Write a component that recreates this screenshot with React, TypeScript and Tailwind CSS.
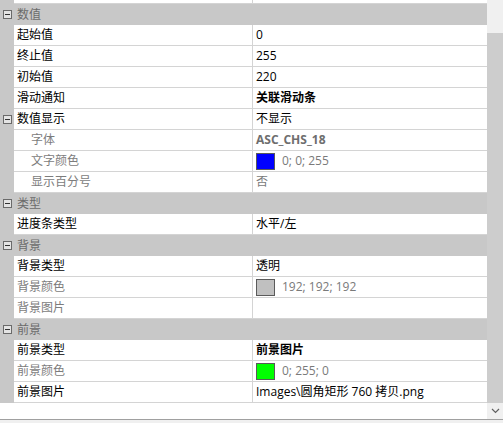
import type { ReactNode } from 'react'

type Prop = {
  kind: 'header' | 'row'
  name: string
  value?: ReactNode
  expand?: boolean
  indent?: boolean
  dim?: boolean
}

const FONT = { fontFamily: '"Open Sans", "Noto Sans CJK SC", sans-serif' }

function Swatch({ color, text }: { color: string; text: string }) {
  return (
    <span className="flex items-center gap-[7px]">
      <span className={`h-[17px] w-[19px] border border-[#5a5a5a] ${color}`} />
      <span className="text-[#7a7a7a]">{text}</span>
    </span>
  )
}

const props: Prop[] = [
  { kind: 'header', name: '数值' },
  { kind: 'row', name: '起始值', value: '0' },
  { kind: 'row', name: '终止值', value: '255' },
  { kind: 'row', name: '初始值', value: '220' },
  { kind: 'row', name: '滑动通知', value: <span className="font-bold">关联滑动条</span> },
  { kind: 'row', name: '数值显示', value: '不显示', expand: true },
  { kind: 'row', name: '字体', indent: true, dim: true, value: <span className="font-bold text-[#6e6e6e]">ASC_CHS_18</span> },
  { kind: 'row', name: '文字颜色', indent: true, dim: true, value: <Swatch color="bg-[#0000ff]" text="0; 0; 255" /> },
  { kind: 'row', name: '显示百分号', indent: true, dim: true, value: <span className="text-[#7a7a7a]">否</span> },
  { kind: 'header', name: '类型' },
  { kind: 'row', name: '进度条类型', value: '水平/左' },
  { kind: 'header', name: '背景' },
  { kind: 'row', name: '背景类型', value: '透明' },
  { kind: 'row', name: '背景颜色', dim: true, value: <Swatch color="bg-[#c0c0c0]" text="192; 192; 192" /> },
  { kind: 'row', name: '背景图片', dim: true, value: '' },
  { kind: 'header', name: '前景' },
  { kind: 'row', name: '前景类型', value: <span className="font-bold">前景图片</span> },
  { kind: 'row', name: '前景颜色', dim: true, value: <Swatch color="bg-[#00ff00]" text="0; 255; 0" /> },
  { kind: 'row', name: '前景图片', value: 'Images\\圆角矩形 760 拷贝.png' },
]

function MinusBox() {
  return (
    <svg width="9" height="9" viewBox="0 0 9 9" className="block">
      <rect x="0.5" y="0.5" width="8" height="8" fill="#e4e4e4" stroke="#6a6a6a" />
      <path d="M2 4.5h5" stroke="#333" strokeWidth="1" />
    </svg>
  )
}

function PropRow({ p }: { p: Prop }) {
  if (p.kind === 'header') {
    return (
      <div className="flex h-[21px] items-center bg-[#c8c8c8]">
        <div className="flex w-[14px] justify-center pl-[1px]">
          <MinusBox />
        </div>
        <span className="pl-[3px] text-[#6b6b6b]">{p.name}</span>
      </div>
    )
  }
  return (
    <div className="flex h-[21px]">
      <div className="flex w-[14px] items-center justify-center bg-[#c8c8c8] pl-[1px]">
        {p.expand && <MinusBox />}
      </div>
      <div
        className={`flex w-[239px] items-center border-r border-b border-[#d4d4d4] bg-white ${
          p.indent ? 'pl-[17px]' : 'pl-[3px]'
        } ${p.dim ? 'text-[#7c7c7c]' : 'text-black'}`}
      >
        {p.name}
      </div>
      <div className="flex flex-1 items-center border-b border-[#d4d4d4] bg-white pl-[3px] text-black">
        {p.value}
      </div>
    </div>
  )
}

export default function App() {
  return (
    <div className="flex h-[423px] w-[503px] flex-col overflow-hidden bg-[#f0f0f0] text-[12px] leading-none" style={FONT}>
      <div className="flex h-[419px]">
        {/* property grid */}
        <div className="flex w-[487px] flex-col bg-white">
          {/* partial row scrolled off the top */}
          <div className="flex h-[4px]">
            <div className="w-[14px] bg-[#c8c8c8]" />
            <div className="w-[239px] border-r border-b border-[#d4d4d4]" />
            <div className="flex-1 border-b border-[#d4d4d4]" />
          </div>
          {props.map((p, i) => (
            <PropRow key={i} p={p} />
          ))}
          <div className="flex-1 bg-white" />
        </div>

        {/* scrollbar */}
        <div className="flex w-[16px] flex-col bg-[#f0f0f0]">
          <div className="h-[33px]" />
          <div className="h-[370px] bg-[#cdcdcd]" />
          <div className="flex flex-1 items-center justify-center">
            <svg width="9" height="6" viewBox="0 0 9 6">
              <path d="M1 1l3.5 3.5L8 1" fill="none" stroke="#606060" strokeWidth="1.2" />
            </svg>
          </div>
        </div>
      </div>
      <div className="h-[1px] bg-[#a0a0a0]" />
      <div className="flex-1 bg-[#f0f0f0]" />
    </div>
  )
}
